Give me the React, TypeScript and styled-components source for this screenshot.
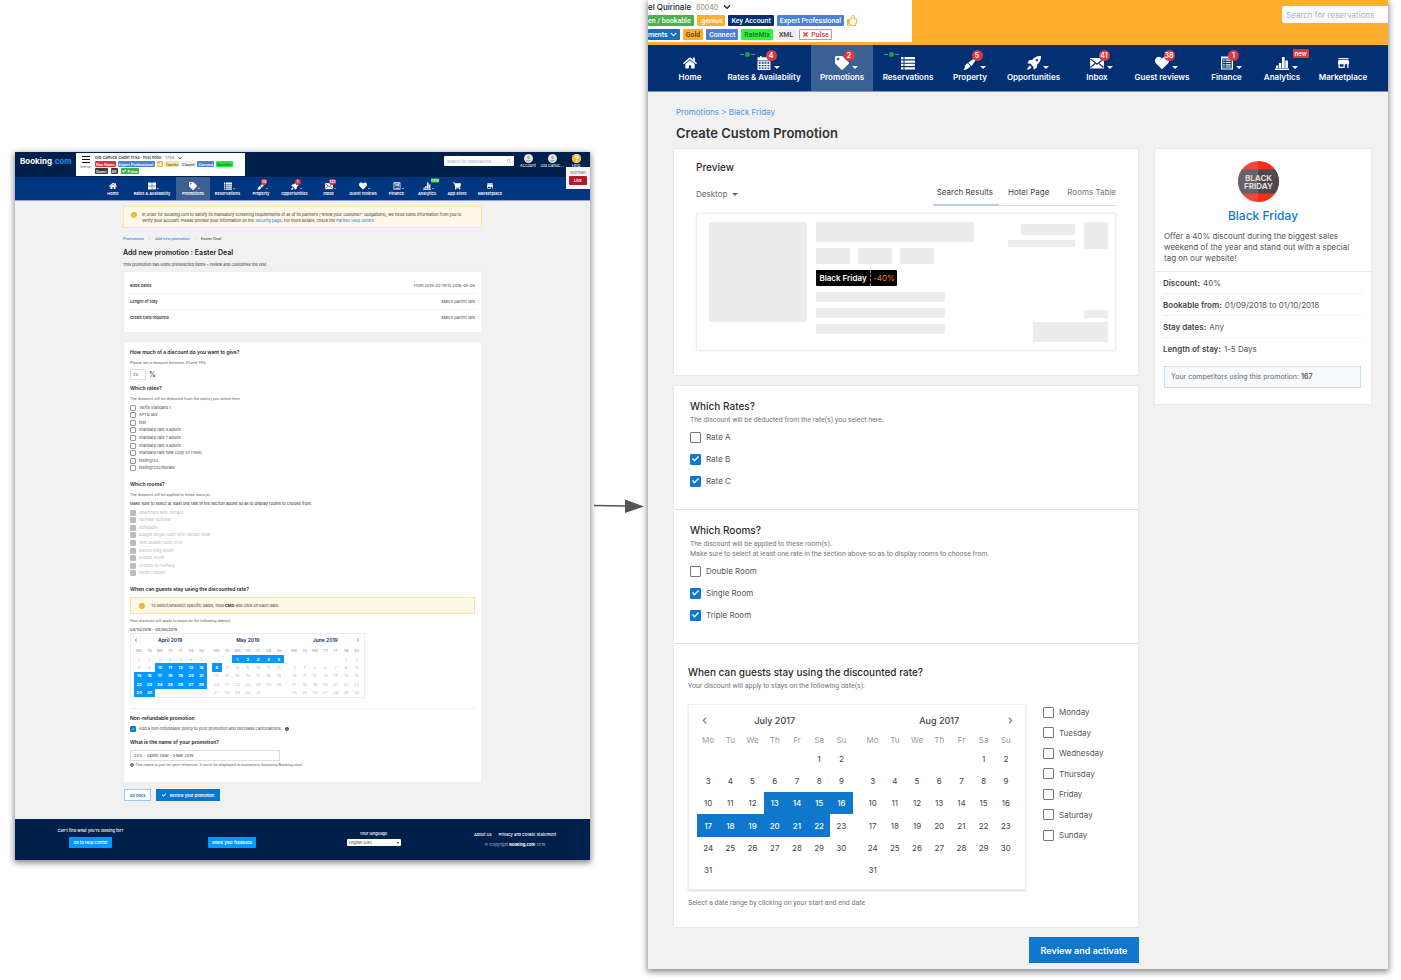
import React from "react";
import styled, { createGlobalStyle, css } from "styled-components";
import {
  FaHome, FaTag, FaHeart, FaShoppingCart, FaThumbsUp, FaRegThumbsUp, FaChevronDown,
  FaChevronLeft, FaChevronRight, FaTimes, FaSearch, FaUserCircle, FaQuestionCircle,
  FaInfoCircle, FaExclamationCircle, FaCheck, FaThLarge,
} from "react-icons/fa";
import { MdStore } from "react-icons/md";

const GlobalStyle = createGlobalStyle`
  *, *::before, *::after { box-sizing: border-box; }
  body { margin: 0; background: #fff; font-family: Inter, "Liberation Sans", sans-serif; color: #333; }
  h1, h2, h3, p, ul, dl, dd { margin: 0; padding: 0; }
  button, input, select { font-family: inherit; margin: 0; }
  a { text-decoration: none; color: inherit; }
  svg { display: block; }
`;

const compact = css`
  font-family: Roboto, "Liberation Sans", sans-serif;
`;

/* ---------- stage ---------- */
const Stage = styled.main`
  display: grid;
  grid-template-columns: 575fr 58fr 740fr;
  align-items: start;
  padding: 0 13px 11px 15px;
`;
const Screen = styled.section<{ $top?: number }>`
  margin-top: ${(p) => p.$top ?? 0}px;
  background: #f1f1f1;
  min-width: 0;
  box-shadow: 0 2px 6px 1px rgba(0, 0, 0, 0.45);
`;
const ArrowCell = styled.div`
  padding: 496px 3px 0 4px;
`;

/* ---------- shared parts ---------- */
const Check = styled.input<{ $size: number }>`
  appearance: none;
  flex: none;
  display: grid;
  place-content: center;
  width: ${(p) => p.$size}px;
  height: ${(p) => p.$size}px;
  border: 1px solid ${(p) => (p.$size < 8 ? "#999" : "#777")};
  border-radius: 1px;
  background: #fff;
  &::before {
    content: "";
    width: ${(p) => p.$size - 3}px;
    height: ${(p) => p.$size - 3}px;
    background: #fff;
    clip-path: polygon(6% 50%, 18% 38%, 38% 58%, 82% 14%, 94% 26%, 38% 84%);
    opacity: 0;
  }
  &:checked { background: #0f78cc; border-color: #0f78cc; }
  &:checked::before { opacity: 1; }
  &:disabled { background: #bdbdbd; border-color: #bdbdbd; }
`;
const NavBar = styled.nav<{ $small?: boolean }>`
  display: grid;
  background: ${(p) => (p.$small ? "#003580" : "#023072")};
  ${(p) =>
    p.$small
      ? css`
          grid-template-columns: 83fr 30fr 48fr 34fr 35fr 32fr 35fr 33fr 36fr 31fr 30fr 30fr 36fr 82fr;
          height: 24px;
          border-bottom: 1px solid #8ea6cc;
        `
      : css`
          grid-template-columns: 15fr 54fr 94fr 62fr 70fr 54fr 73fr 54fr 76fr 53fr 58fr 64fr 13fr;
          height: 47px;
          border-bottom: 1px solid #7f95b8;
        `}
`;
const NavItem = styled.a<{ $active?: boolean; $small?: boolean }>`
  position: relative;
  display: flex;
  flex-direction: column;
  align-items: center;
  color: #fff;
  white-space: nowrap;
  background: ${(p) => (p.$active ? "#3c6094" : "transparent")};
  min-width: 0;
  font-weight: 600;
  ${(p) =>
    p.$small
      ? css`
          padding-top: 5px;
          font-size: 4px;
          line-height: 6px;
        `
      : css`
          padding-top: 9px;
          font-size: 8px;
          line-height: 12px;
        `}
`;
const NavIcon = styled.span<{ $small?: boolean }>`
  position: relative;
  display: flex;
  align-items: center;
  justify-content: center;
  width: ${(p) => (p.$small ? 8 : 15)}px;
  height: ${(p) => (p.$small ? 8 : 17)}px;
  margin-bottom: ${(p) => (p.$small ? 1 : 0)}px;
  font-size: ${(p) => (p.$small ? 8 : 14)}px;
`;
const Caret = styled.span<{ $small?: boolean }>`
  position: absolute;
  left: 100%;
  bottom: ${(p) => (p.$small ? 1 : 2)}px;
  margin-left: ${(p) => (p.$small ? 1 : 2)}px;
  border: solid transparent;
  border-width: ${(p) => (p.$small ? "1px 1px 0" : "3px 3px 0")};
  border-top-color: #fff;
`;
const Badge = styled.span<{ $small?: boolean; $tone?: "new" | "green" }>`
  position: absolute;
  left: ${(p) => (p.$small ? 4 : 9)}px;
  top: ${(p) => (p.$small ? -3 : -4)}px;
  min-width: ${(p) => (p.$small ? 6 : 11)}px;
  padding: 0 1px;
  text-align: center;
  font-size: ${(p) => (p.$small ? 4 : 7)}px;
  line-height: ${(p) => (p.$small ? 6 : 11)}px;
  border-radius: 6px;
  background: #d93a41;
  color: #fff;
  ${(p) =>
    p.$tone === "new" &&
    css`
      left: 18px;
      top: -5px;
      padding: 0 2px;
      font-size: 6px;
      line-height: 9px;
      border-radius: 1px;
    `}
  ${(p) =>
    p.$tone === "green" &&
    css`
      left: 8px;
      top: -4px;
      border-radius: 1px;
      background: #0a9a2c;
      line-height: 5px;
      padding: 0;
    `}
`;
const Beacon = styled.span`
  position: absolute;
  right: 17px;
  top: -2px;
  display: grid;
  place-content: center;
  width: 15px;
  height: 5px;
  background: linear-gradient(90deg, #5f87a8 0 4px, transparent 4px 11px, #5f87a8 11px) center / 100% 1px no-repeat;
  &::before {
    content: "";
    width: 5px;
    height: 5px;
    border-radius: 50%;
    background: #1fa034;
  }
`;

const Glyph = ({ children }: { children: React.ReactNode }) => (
  <svg width="1em" height="1em" viewBox="0 0 14 14" fill="currentColor">{children}</svg>
);
const BarsIcon = () => (
  <Glyph><path d="M0 12.500h14V14H0zM1 9.500h2.200V12H1zM3.900 7h2.400v5H3.900zM7 1h2.600v11H7zM10.300 4.500h2.600V12h-2.600z" /></Glyph>
);
const MailIcon = () => (
  <Glyph>
    <path d="M0 2h14v10.500H0z" />
    <path d="M0.500 3l6.500 5.200L13.500 3M0.500 11.500l4.500-4M13.500 11.500l-4.500-4" fill="none" stroke="#023072" strokeWidth="1.100" />
  </Glyph>
);
const ListIcon = () => (
  <Glyph><path d="M0 1h2.500v2.300H0zM3.500 1H14v2.300H3.500zM0 4.400h2.500v2.300H0zM3.500 4.400H14v2.300H3.500zM0 7.800h2.500v2.300H0zM3.500 7.800H14v2.300H3.500zM0 11.200h2.500v2.300H0zM3.500 11.200H14v2.300H3.500z" /></Glyph>
);
const CalendarIcon = () => (
  <Glyph>
    <path d="M3 0h1.600v1.300h4.800V0H11v1.300h2.500V4.500h-13V1.300H3z" />
    <path fillRule="evenodd" d="M.5 5.300h13V14H.5zM1.800 6.300v1.500h1.800V6.300zM4.700 6.300v1.500h1.900V6.300zM7.600 6.300v1.500h1.800V6.300zM10.500 6.300v1.500h1.800V6.300zM1.800 8.900v1.400h1.800V8.900zM4.700 8.900v1.400h1.900V8.900zM7.600 8.900v1.400h1.800V8.900zM10.500 8.900v1.400h1.800V8.900zM1.800 11.400v1.400h1.800v-1.400zM4.700 11.400v1.400h1.900v-1.400zM7.600 11.400v1.400h1.800v-1.400zM10.500 11.400v1.400h1.800v-1.400z" />
  </Glyph>
);
const BrushIcon = () => (
  <Glyph>
    <path d="M12.300.4c.8-.4 1.700.5 1.300 1.300L8.600 9 5.200 5.800z" transform="translate(0 1)" />
    <path d="M4.700 7.300l2.700 2.600c-1.200 2.400-3.900 3.900-7.200 4 1.300-.8 1.500-2 1.700-3.200.3-1.700 1.300-2.900 2.800-3.400z" />
  </Glyph>
);
const RocketIcon = () => (
  <Glyph>
    <path fillRule="evenodd" d="M14 0c.1 3.700-1.100 6.400-3.700 8.600l-.6 3.200-2.900 1.900-.6-3.100-2.800-2.800L.3 7.200l1.900-2.900 3.200-.6C7.600 1.100 10.300-.1 14 0zM9.900 2.900a1.200 1.200 0 100 2.400 1.200 1.200 0 000-2.400z" />
    <path d="M2.800 9.400l1.800 1.800C3.500 12.600 2 13.700.2 13.800c.1-1.800 1.200-3.300 2.600-4.400z" />
  </Glyph>
);
const LedgerIcon = () => (
  <Glyph><path fillRule="evenodd" d="M1 .5h12v13H1zM2.300 2.500v10h9.400v-10zM3.200 3.600h1.500v1.200H3.200zM5.600 3.600h5.200v1.200H5.600zM3.200 5.900h1.500v1.200H3.200zM5.600 5.900h5.200v1.200H5.600zM3.200 8.200h1.500v1.200H3.200zM5.600 8.200h5.200v1.200H5.600zM3.200 10.400h1.500v1.200H3.200zM5.600 10.400h5.200v1.200H5.600z" /></Glyph>
);

type Item = { label: string; icon: React.ReactNode; badge?: string; tone?: "new" | "green"; caret?: boolean; active?: boolean; beacon?: boolean };

function Nav({ items, small }: { items: Item[]; small?: boolean }) {
  return (
    <NavBar $small={small}>
      <span />
      {items.map((it) => (
        <NavItem key={it.label} href="#" $small={small} $active={it.active}>
          <NavIcon $small={small}>
            {it.icon}
            {it.beacon && <Beacon />}
            {it.badge && <Badge $small={small} $tone={it.tone}>{it.badge}</Badge>}
            {it.caret && <Caret $small={small} />}
          </NavIcon>
          {it.label}
        </NavItem>
      ))}
    </NavBar>
  );
}

const smallNav: Item[] = [
  { label: "Home", icon: <FaHome /> },
  { label: "Rates & Availability", icon: <FaThLarge />, caret: true },
  { label: "Promotions", icon: <FaTag />, caret: true, active: true },
  { label: "Reservations", icon: <ListIcon />, caret: true },
  { label: "Property", icon: <BrushIcon />, badge: "13", caret: true },
  { label: "Opportunities", icon: <RocketIcon />, badge: "1", caret: true },
  { label: "Inbox", icon: <MailIcon />, badge: "121", caret: true },
  { label: "Guest reviews", icon: <FaHeart />, caret: true },
  { label: "Finance", icon: <LedgerIcon />, caret: true },
  { label: "Analytics", icon: <BarsIcon />, badge: "new", tone: "green", caret: true },
  { label: "App Store", icon: <FaShoppingCart /> },
  { label: "Marketplace", icon: <MdStore /> },
];
const largeNav: Item[] = [
  { label: "Home", icon: <FaHome /> },
  { label: "Rates & Availability", icon: <CalendarIcon />, badge: "4", caret: true, beacon: true },
  { label: "Promotions", icon: <FaTag />, badge: "2", caret: true, active: true },
  { label: "Reservations", icon: <ListIcon />, beacon: true },
  { label: "Property", icon: <BrushIcon />, badge: "5", caret: true },
  { label: "Opportunities", icon: <RocketIcon />, caret: true },
  { label: "Inbox", icon: <MailIcon />, badge: "41", caret: true },
  { label: "Guest reviews", icon: <FaHeart />, badge: "38", caret: true },
  { label: "Finance", icon: <LedgerIcon />, badge: "1", caret: true },
  { label: "Analytics", icon: <BarsIcon />, badge: "new", tone: "new", caret: true },
  { label: "Marketplace", icon: <MdStore size={16} /> },
];

const Tag = styled.span<{ $bg: string; $fg?: string; $line?: string; $small?: boolean; $cut?: boolean }>`
  ${compact}
  display: inline-flex;
  align-items: center;
  gap: 2px;
  white-space: nowrap;
  background: ${(p) => p.$bg};
  color: ${(p) => p.$fg ?? "#fff"};
  font-weight: 500;
  border-radius: 1px;
  ${(p) => p.$line && `box-shadow: inset 0 0 0 1px ${p.$line};`}
  ${(p) =>
    p.$small
      ? css`
          height: 6px;
          padding: 0 1px;
          font-size: 4px;
        `
      : css`
          height: 11px;
          padding: 0 3px 0 ${p.$cut ? 0 : 3}px;
          font-size: 7px;
        `}
`;
const TagRow = styled.div<{ $gap: number }>`
  display: flex;
  align-items: center;
  gap: ${(p) => p.$gap}px;
`;

/* ---------- existing page (left) ---------- */
const OldTop = styled.header`
  position: relative;
  display: flex;
  align-items: flex-start;
  height: 25px;
  padding: 1px 8px 0 5px;
  background: #00204b;
`;
const Brand = styled.a`
  width: 56px;
  padding-top: 2px;
  font-size: 8px;
  line-height: 12px;
  font-weight: 700;
  color: #fff;
  span { color: #1492e6; }
`;
const OldHotel = styled.div`
  display: flex;
  gap: 4px;
  width: 169px;
  height: 23px;
  padding: 2px 4px;
  background: #fff;
`;
const Burger = styled.button`
  display: flex;
  flex-direction: column;
  align-items: center;
  gap: 2px;
  width: 11px;
  padding: 1px 0 0;
  border: 0;
  background: none;
  font-size: 3px;
  line-height: 4px;
  color: #555;
  i { width: 8px; height: 1px; background: #111; }
`;
const OldHotelInfo = styled.div`
  display: flex;
  flex-direction: column;
  gap: 1px;
  font-size: 4px;
  line-height: 5px;
  font-weight: 500;
  color: #222;
`;
const OldName = styled.div`
  display: flex;
  align-items: center;
  gap: 4px;
  white-space: nowrap;
  small { font-size: 4px; color: #888; }
`;
const OldSearch = styled.label`
  display: flex;
  align-items: center;
  justify-content: space-between;
  width: 70px;
  height: 10px;
  margin: 3px 2px 0 auto;
  padding: 0 3px;
  background: #fff;
  border-radius: 1px;
  color: #9db0c9;
  font-size: 4px;
  input { width: 56px; padding: 0; border: 0; font-size: 4px; outline: 0; }
  input::placeholder { color: #8fa6c6; opacity: 1; }
`;
const OldUser = styled.a<{ $gold?: boolean }>`
  display: flex;
  flex-direction: column;
  align-items: center;
  width: 24px;
  padding-top: 1px;
  font-size: 4px;
  line-height: 6px;
  color: #fff;
  white-space: nowrap;
  svg {
    width: 9px;
    height: 9px;
    border-radius: 50%;
    background: ${(p) => (p.$gold ? "#fff" : "#b4b4b4")};
    color: ${(p) => (p.$gold ? "#feb61c" : "#e8e8e8")};
  }
  &:last-of-type { margin-right: -6px; }
`;
const LiveBox = styled.div`
  position: absolute;
  z-index: 1;
  right: 0;
  top: 15px;
  width: 24px;
  height: 22px;
  padding: 2px 3px;
  background: #f4f4f8;
  text-align: center;
  font-size: 4px;
  line-height: 7px;
  color: #666;
  button {
    display: block;
    width: 100%;
    height: 9px;
    padding: 0;
    border: 0;
    border-radius: 1px;
    background: #b01c2c;
    color: #fff;
    font-size: 4px;
    font-weight: 600;
  }
`;
const OldBody = styled.div`
  padding: 5px 108px 18px;
`;
const Notice = styled.div<{ $inner?: boolean }>`
  display: flex;
  align-items: ${(p) => (p.$inner ? "center" : "flex-start")};
  gap: ${(p) => (p.$inner ? 6 : 5)}px;
  height: ${(p) => (p.$inner ? 17 : 22)}px;
  margin-top: ${(p) => (p.$inner ? 5 : 0)}px;
  padding: ${(p) => (p.$inner ? "0 8px" : "5px 7px")};
  border: 1px solid #fbe3a8;
  background: #fef8e7;
  font-size: 4px;
  line-height: 6px;
  color: #333;
  white-space: nowrap;
  svg { flex: none; width: 6px; height: 6px; color: #eda818; }
  a { color: #0b71c4; }
`;
const OldCrumbs = styled.nav`
  ${compact}
  display: flex;
  gap: 5px;
  margin-top: 8px;
  font-size: 4px;
  line-height: 6px;
  color: #444;
  a { color: #1779cf; }
`;
const OldTitle = styled.h1`
  margin-top: 6px;
  font-size: 7px;
  line-height: 10px;
  font-weight: 600;
  color: #222;
`;
const OldIntro = styled.p`
  margin-top: 4px;
  font-size: 4px;
  line-height: 6px;
  white-space: nowrap;
`;
const OldCard = styled.section<{ $form?: boolean }>`
  margin-top: ${(p) => (p.$form ? 8 : 3)}px;
  padding: ${(p) => (p.$form ? "7px 6px 14px" : "5px 6px 7px")};
  background: #fff;
  border: 1px solid #eee;
`;
const Facts = styled.dl`
  div {
    display: flex;
    justify-content: space-between;
    align-items: center;
    height: 16px;
    font-size: 4px;
  }
  div + div { border-top: 1px solid #f2f2f2; }
  dt { font-weight: 600; }
  dd { color: #444; }
`;
const OldHeading = styled.h2<{ $gap?: number }>`
  margin-top: ${(p) => p.$gap ?? 0}px;
  font-size: 5px;
  line-height: 6px;
  font-weight: 600;
  color: #222;
  white-space: nowrap;
`;
const OldNote = styled.p<{ $gap?: number; $dark?: boolean }>`
  ${(p) => !p.$dark && compact}
  margin-top: ${(p) => p.$gap ?? 5}px;
  display: flex;
  align-items: center;
  gap: 1px;
  font-size: 4px;
  line-height: 6px;
  color: ${(p) => (p.$dark ? "#222" : "#666")};
  white-space: nowrap;
`;
const OldPercent = styled.label`
  display: flex;
  align-items: center;
  gap: 3px;
  margin-top: 3px;
  font-size: 7px;
  line-height: 11px;
  input {
    width: 16px;
    height: 11px;
    padding: 0 2px;
    border: 1px solid #ddd;
    font-size: 4px;
    color: #444;
  }
`;
const OldList = styled.ul`
  display: grid;
  grid-auto-rows: 1fr;
  height: 68px;
  margin-top: 2px;
  list-style: none;
`;
const OldOption = styled.label<{ $off?: boolean }>`
  display: flex;
  align-items: center;
  gap: 3px;
  height: 100%;
  font-size: 4px;
  line-height: 6px;
  font-weight: 400;
  color: ${(p) => (p.$off ? "#b5b5b5" : "#444")};
  white-space: nowrap;
`;
const OldCalendar = styled.div`
  display: grid;
  grid-template-columns: repeat(3, 1fr);
  gap: 5px;
  width: 68%;
  height: 65px;
  padding: 0 2px 0 3px;
  border: 1px solid #eee;
`;
const OldMonthHead = styled.div`
  display: grid;
  grid-template-columns: 6px 1fr 6px;
  align-items: center;
  height: 11px;
  text-align: center;
  font-size: 5px;
  font-weight: 600;
  color: #0a2c6e;
  button { padding: 0; border: 0; background: none; color: #888; font-size: 4px; }
`;
const OldGrid = styled.table`
  width: 100%;
  height: 52px;
  border-collapse: collapse;
  table-layout: fixed;
  text-align: center;
  font-size: 4px;
  line-height: 5px;
  th { padding: 0; font-weight: 400; color: #999; height: 10px; }
`;
const OldDay = styled.td<{ $on: boolean }>`
  padding: 0;
  background: ${(p) => (p.$on ? "#0896ff" : "transparent")};
  color: ${(p) => (p.$on ? "#fff" : "#b8b8b8")};
  font-weight: ${(p) => (p.$on ? 700 : 400)};
`;
const OldRule = styled.hr`
  margin: 10px 0 6px;
  border: 0;
  border-top: 1px solid #eee;
`;
const OldField = styled.input`
  display: block;
  width: 150px;
  height: 11px;
  margin-top: 5px;
  padding: 0 3px;
  border: 1px solid #ddd;
  font-size: 4px;
  color: #444;
`;
const OldActions = styled.div`
  display: flex;
  gap: 5px;
  padding: 6px 1px 0;
`;
const OldButton = styled.button<{ $primary?: boolean }>`
  display: flex;
  align-items: center;
  justify-content: center;
  gap: 4px;
  width: ${(p) => (p.$primary ? 64 : 27)}px;
  height: 12px;
  padding: 0;
  border: 1px solid ${(p) => (p.$primary ? "#0b77cc" : "#9cc8ec")};
  background: ${(p) => (p.$primary ? "#0b77cc" : "#fff")};
  color: ${(p) => (p.$primary ? "#fff" : "#0b77cc")};
  font-size: 4px;
  font-weight: 600;
  white-space: nowrap;
`;
const OldFooter = styled.footer`
  display: grid;
  grid-template-columns: 151fr 132fr 151fr 132fr 9fr;
  height: 41px;
  padding-top: 9px;
  background: #00204b;
  color: #fff;
  font-size: 4px;
  line-height: 6px;
  font-weight: 500;
  white-space: nowrap;
`;
const FootCell = styled.div<{ $gap: number; $top?: number }>`
  display: flex;
  flex-direction: column;
  align-items: center;
  gap: ${(p) => p.$gap}px;
  padding-top: ${(p) => p.$top ?? 0}px;
  small { font-size: 4px; color: #8f9db5; }
  small b { color: #fff; }
`;
const Language = styled.span`
  display: flex;
  align-items: center;
  width: 54px;
  height: 7px;
  padding-right: 2px;
  border-radius: 1px;
  background: #fff;
  select {
    flex: 1;
    appearance: none;
    padding: 0 2px;
    border: 0;
    background: none;
    font-size: 4px;
    line-height: 6px;
    color: #333;
  }
  &::after {
    content: "";
    border: 1px solid transparent;
    border-top: 2px solid #222;
    border-bottom: 0;
  }
`;
const FootLinks = styled.div`
  display: flex;
  gap: 7px;
`;
const FootButton = styled.button`
  height: 11px;
  padding: 0 4px;
  border: 0;
  border-radius: 1px;
  background: #0896ff;
  color: #fff;
  font-size: 4px;
  font-weight: 600;
`;

const dayNames = ["Mo", "Tu", "We", "Th", "Fr", "Sa", "Su"];
function weeks(offset: number, count: number): (number | null)[][] {
  const cells: (number | null)[] = Array(offset).fill(null);
  for (let d = 1; d <= count; d++) cells.push(d);
  while (cells.length % 7) cells.push(null);
  return Array.from({ length: cells.length / 7 }, (_, i) => cells.slice(i * 7, i * 7 + 7));
}

const oldMonths = [
  { name: "April 2019", offset: 0, count: 30, from: 10, to: 30 },
  { name: "May 2019", offset: 2, count: 31, from: 1, to: 6 },
  { name: "June 2019", offset: 5, count: 30, from: 99, to: 0 },
];
const oldRates = ["Tarifa Standard 1", "APTB dev", "test", "Standard rate 6 adults", "Standard rate 7 adults", "Standard rate 6 adults", "Standard rate new copy v2 FINAL", "testing123", "testing123childrate"];
const oldRooms = ["Apartment with Terrace", "Sprinkle Sprinkle", "sdflkjsdfs", "budget single room With Garden view", "Test double room 1234", "Deluxe King Room", "Double Room", "Ground-to-Yurface", "Perfect Room"];

function ExistingPage() {
  return (
    <Screen $top={152}>
      <OldTop>
        <Brand href="#">Booking<span>.com</span></Brand>
        <OldHotel>
          <Burger><i /><i /><i />Internal</Burger>
          <OldHotelInfo>
            <OldName>Old Canuck Cabin 1234- Test hotel <small>1783</small> <FaChevronDown /></OldName>
            <TagRow $gap={2}>
              <Tag $small $bg="#e0313c">Non Rates</Tag>
              <Tag $small $bg="#4a80d8">Expert Professional</Tag>
              <Tag $small $bg="#feb130"><FaThumbsUp /></Tag>
              <Tag $small $bg="#fde3a2" $fg="#665">Tourist</Tag>
              <Tag $small $bg="#f4f4f4" $fg="#555">Closed</Tag>
              <Tag $small $bg="#4a80d8">Connect</Tag>
              <Tag $small $bg="#18f02c" $fg="#275">RateMix</Tag>
            </TagRow>
            <TagRow $gap={3}>
              <Tag $small $bg="#3a3a3a">Quest</Tag>
              <Tag $small $bg="#3a3a3a">XX</Tag>
              <Tag $small $bg="#3fae4c"><FaCheck />Pulse</Tag>
            </TagRow>
          </OldHotelInfo>
        </OldHotel>
        <OldSearch><input type="search" aria-label="Search for reservations" placeholder="Search for reservations" /><FaSearch /></OldSearch>
        <OldUser href="#"><FaUserCircle />Account</OldUser>
        <OldUser href="#"><FaUserCircle />Old Canuc...</OldUser>
        <OldUser href="#" $gold><FaQuestionCircle />Help</OldUser>
        <LiveBox>Norman<button>Live</button></LiveBox>
      </OldTop>
      <Nav items={smallNav} small />
      <OldBody>
        <Notice>
          <FaExclamationCircle />
          <p>
            In order for Booking.com to satisfy its mandatory screening requirements of all of its partners ("know your customer" obligations), we need some information from you to<br />
            verify your account. Please provide your information on the <a href="#">Security page</a>. For more details, check the <a href="#">Partner Help Centre</a>
          </p>
        </Notice>
        <OldCrumbs><a href="#">Promotions</a><span>›</span><a href="#">Add new promotion</a><span>›</span><span>Easter Deal</span></OldCrumbs>
        <OldTitle>Add new promotion : Easter Deal</OldTitle>
        <OldIntro>This promotion has some preselected items – review and customise the rest</OldIntro>
        <OldCard>
          <Facts>
            <div><dt>Book dates</dt><dd>From 2019-02-19 to 2019-05-06</dd></div>
            <div><dt>Length of stay</dt><dd>Match parent rate</dd></div>
            <div><dt>Credit card required</dt><dd>Match parent rate</dd></div>
          </Facts>
        </OldCard>
        <OldCard $form>
          <OldHeading>How much of a discount do you want to give?</OldHeading>
          <OldNote>Please set a discount between 20 and 99%</OldNote>
          <OldPercent><input aria-label="Discount" defaultValue="25" />%</OldPercent>
          <OldHeading $gap={5}>Which rates?</OldHeading>
          <OldNote>The discount will be deducted from the rate(s) you select here.</OldNote>
          <OldList>
            {oldRates.map((r, i) => <li key={i}><OldOption><Check type="checkbox" $size={6} />{r}</OldOption></li>)}
          </OldList>
          <OldHeading $gap={9}>Which rooms?</OldHeading>
          <OldNote>The discount will be applied to these room(s).</OldNote>
          <OldNote $gap={3} $dark>Make sure to select at least one rate in the section above so as to display rooms to choose from.</OldNote>
          <OldList>
            {oldRooms.map((r) => <li key={r}><OldOption $off><Check type="checkbox" disabled $size={6} />{r}</OldOption></li>)}
          </OldList>
          <OldHeading $gap={9}>When can guests stay using the discounted rate?</OldHeading>
          <Notice $inner><FaInfoCircle /><p>To select/unselect specific dates, hold <b>CMD</b> and click on each date.</p></Notice>
          <OldNote $gap={4}>Your discount will apply to stays on the following date(s):</OldNote>
          <OldNote $gap={3} $dark>04/10/2019 - 05/06/2019</OldNote>
          <OldCalendar>
            {oldMonths.map((m, mi) => (
              <div key={m.name}>
                <OldMonthHead>
                  {mi === 0 ? <button aria-label="Previous"><FaChevronLeft /></button> : <span />}
                  {m.name}
                  {mi === 2 ? <button aria-label="Next"><FaChevronRight /></button> : <span />}
                </OldMonthHead>
                <OldGrid>
                  <thead><tr>{dayNames.map((d) => <th key={d}>{d}</th>)}</tr></thead>
                  <tbody>
                    {weeks(m.offset, m.count).map((w, i) => (
                      <tr key={i}>{w.map((d, j) => <OldDay key={j} $on={!!d && d >= m.from && d <= m.to}>{d}</OldDay>)}</tr>
                    ))}
                  </tbody>
                </OldGrid>
              </div>
            ))}
          </OldCalendar>
          <OldRule />
          <OldHeading>Non-refundable promotion</OldHeading>
          <OldHeading as="div" $gap={5}>
            <OldOption><Check type="checkbox" defaultChecked $size={6} />Add a non-refundable policy to your promotion and decrease cancellations. <FaInfoCircle /></OldOption>
          </OldHeading>
          <OldHeading $gap={7}>What is the name of your promotion?</OldHeading>
          <OldField aria-label="Promotion name" defaultValue="25% - Easter Deal - 5 Mar 2019" />
          <OldNote $gap={1}><FaInfoCircle />This name is just for your reference. It won't be displayed to customers browsing Booking.com.</OldNote>
        </OldCard>
        <OldActions>
          <OldButton>Go back</OldButton>
          <OldButton $primary><FaCheck />Review your promotion</OldButton>
        </OldActions>
      </OldBody>
      <OldFooter>
        <FootCell $gap={3}>Can't find what you're looking for?<FootButton>Go to Help Center</FootButton></FootCell>
        <FootCell $gap={0} $top={9}><FootButton>Share your feedback</FootButton></FootCell>
        <FootCell $gap={2} $top={3}>
          <label htmlFor="lang">Your language</label>
          <Language><select id="lang"><option>English (UK)</option></select></Language>
        </FootCell>
        <FootCell $gap={4} $top={4}>
          <FootLinks><a href="#">About Us</a><a href="#">Privacy and Cookie Statement</a></FootLinks>
          <small>© Copyright <b>Booking.com</b> 2019</small>
        </FootCell>
      </OldFooter>
    </Screen>
  );
}

/* ---------- redesigned page (right) ---------- */
const Top = styled.header`
  display: flex;
  justify-content: space-between;
  align-items: flex-start;
  height: 45px;
  background: #feae2d;
`;
const Hotel = styled.div`
  display: flex;
  flex-direction: column;
  gap: 3px;
  width: 264px;
  height: 42px;
  padding-top: 2px;
  background: #fff;
`;
const HotelName = styled.div`
  display: flex;
  align-items: center;
  gap: 5px;
  height: 10px;
  font-size: 8px;
  font-weight: 500;
  color: #222;
  small { font-size: 7px; color: #888; font-weight: 400; }
`;
const Search = styled.input`
  width: 106px;
  height: 17px;
  margin-top: 6px;
  padding: 0 4px;
  border: 0;
  border-radius: 2px 0 0 2px;
  background: #fff;
  font-size: 8px;
  &::placeholder { color: #9fb0c8; opacity: 1; }
`;
const Body = styled.div`
  padding: 14px 16px 6px 25px;
`;
const Crumbs = styled.nav`
  padding-left: 3px;
  font-size: 8px;
  line-height: 12px;
  color: #4d90e2;
`;
const Title = styled.h1`
  margin: 7px 0;
  padding-left: 3px;
  font-size: 13px;
  line-height: 16px;
  font-weight: 600;
  color: #333;
`;
const Columns = styled.div`
  display: grid;
  grid-template-columns: 466fr 218fr;
  gap: 15px;
  align-items: start;
`;
const Stack = styled.div`
  display: flex;
  flex-direction: column;
  gap: 9px;
  min-width: 0;
`;
const Card = styled.section`
  background: #fff;
  border: 1px solid #e9e9e9;
`;
const PreviewCard = styled(Card)`
  padding: 11px 22px 24px;
`;
const Heading = styled.h2`
  font-size: 10px;
  line-height: 14px;
  font-weight: 500;
  color: #2b2b2b;
`;
const PreviewBar = styled.div`
  display: flex;
  justify-content: space-between;
  align-items: center;
  height: 24px;
  margin: 8px 0 7px;
`;
const Device = styled.label`
  display: flex;
  align-items: center;
  gap: 4px;
  &::after {
    content: "";
    border: 3px solid transparent;
    border-top-color: #666;
    border-bottom: 0;
  }
  select {
    appearance: none;
    padding: 0;
    border: 0;
    background: none;
    font-size: 8px;
    color: #666;
  }
`;
const Tabs = styled.div`
  display: flex;
  align-self: stretch;
  border-bottom: 1px solid #e0e0e0;
`;
const Tab = styled.button<{ $on?: boolean; $last?: boolean; $dim?: boolean }>`
  padding: 0 ${(p) => (p.$last ? 0 : p.$on ? 6 : 9)}px 2px ${(p) => (p.$on ? 4 : 9)}px;
  margin-bottom: -1px;
  border: 0;
  border-bottom: 2px solid ${(p) => (p.$on ? "#bccbe8" : "transparent")};
  background: none;
  font-size: 8px;
  color: ${(p) => (p.$dim ? "#777" : "#444")};
`;
const Mock = styled.div`
  display: flex;
  justify-content: space-between;
  height: 138px;
  padding: 8px 7px 0 12px;
  border: 1px solid #eee;
  box-shadow: 0 0 2px rgba(0, 0, 0, 0.08);
`;
const MockMain = styled.div`
  display: flex;
  gap: 9px;
`;
const MockCol = styled.div<{ $gap: number; $end?: boolean }>`
  display: flex;
  flex-direction: column;
  align-items: ${(p) => (p.$end ? "flex-end" : "flex-start")};
  gap: ${(p) => p.$gap}px;
`;
const MockRow = styled.div<{ $gap: number }>`
  display: flex;
  align-items: center;
  gap: ${(p) => p.$gap}px;
`;
const Bone = styled.span<{ $w: number; $h: number }>`
  display: block;
  width: ${(p) => p.$w}px;
  height: ${(p) => p.$h}px;
  background: #ececec;
`;
const Spacer = styled.span`
  height: 53px;
`;
const DealTag = styled.div`
  display: flex;
  align-items: center;
  height: 16px;
  border-radius: 1px;
  background: #000;
  color: #fff;
  font-size: 8px;
  line-height: 16px;
  b { width: 54px; text-align: center; font-weight: 600; }
  span { width: 27px; text-align: center; color: #ff8418; border-left: 1px dashed #888; }
`;
const FormPart = styled.div<{ $last?: boolean }>`
  padding: ${(p) => (p.$last ? "21px 15px 19px 14px" : "13px 16px 16px")};
  & + & { border-top: 1px solid #e2e2e2; }
`;
const Hint = styled.p`
  ${compact}
  margin-top: 2px;
  font-size: 7px;
  line-height: 10px;
  color: #777;
`;
const Options = styled.div<{ $gap: number }>`
  display: flex;
  flex-direction: column;
  gap: ${(p) => p.$gap}px;
`;
const RateOptions = styled(Options)`
  padding: 6px 0;
`;
const Option = styled.label`
  display: flex;
  align-items: center;
  gap: 5px;
  font-size: 8px;
  line-height: 12px;
  color: #555;
`;
const Schedule = styled.div`
  display: flex;
  gap: 17px;
  margin: 13px 0 8px;
`;
const Calendar = styled.div`
  display: grid;
  grid-template-columns: 1fr 1fr;
  gap: 9px;
  flex: 0 1 338px;
  height: 186px;
  padding: 5px 8px 0;
  border: 1px solid #eee;
  box-shadow: 0 1px 2px rgba(0, 0, 0, 0.16);
`;
const MonthHead = styled.div`
  display: grid;
  grid-template-columns: 14px 1fr 14px;
  align-items: center;
  height: 21px;
  text-align: center;
  font-size: 9px;
  font-weight: 500;
  color: #444;
  button { display: grid; place-content: center; padding: 0; border: 0; background: none; color: #777; font-size: 7px; }
`;
const Grid = styled.table`
  width: 100%;
  height: 150px;
  border-collapse: collapse;
  table-layout: fixed;
  text-align: center;
  font-size: 8px;
  th { padding: 0; height: 17px; font-weight: 400; color: #999; }
`;
const Day = styled.td<{ $on: boolean }>`
  padding: 0;
  background: ${(p) => (p.$on ? "#0f78cc" : "transparent")};
  color: ${(p) => (p.$on ? "#fff" : "#444")};
  font-weight: ${(p) => (p.$on ? 500 : 400)};
`;
const WeekdayOptions = styled(Options)`
  padding-top: 2px;
  justify-content: space-between;
  height: 137px;
`;
const Submit = styled.button`
  align-self: flex-end;
  width: 110px;
  height: 26px;
  padding: 0;
  border: 0;
  background: #0f78cc;
  color: #fff;
  font-size: 9px;
  font-weight: 600;
`;
const Aside = styled(Card)`
  padding-bottom: 16px;
  font-size: 8px;
`;
const Promo = styled.div`
  display: flex;
  flex-direction: column;
  align-items: center;
  padding: 12px 9px 7px;
  border-bottom: 1px solid #eaeaea;
  svg { margin-right: 9px; }
  h2 { margin: 5px 0 6px; font-size: 12px; line-height: 18px; font-weight: 500; color: #0f78cc; }
  p { align-self: stretch; line-height: 11px; color: #555; }
`;
const Details = styled.dl`
  padding: 0 9px 0 8px;
  div { display: flex; align-items: center; gap: 3px; height: 22px; color: #555; }
  div:first-child { height: 21px; }
  div + div { border-top: 1px solid #f0f0f0; }
  dt { font-weight: 600; color: #444; }
`;
const Competitors = styled.p`
  margin: 7px 10px 0 9px;
  padding: 0 6px;
  border: 1px solid #cbddf3;
  background: #f8fafe;
  font-size: 7px;
  line-height: 20px;
  color: #666;
`;

const newMonths = [
  { name: "July 2017", from: 13, to: 22 },
  { name: "Aug 2017", from: 99, to: 0 },
];

function Emblem() {
  return (
    <svg width="41" height="41" viewBox="0 0 41 41" role="img" aria-label="Black Friday">
      <defs><clipPath id="disc"><circle cx="20.500" cy="20.500" r="20.500" /></clipPath></defs>
      <g clipPath="url(#disc)">
        <path fill="#f2483b" d="M0 0h20v41H0z" />
        <path fill="#fb2d12" d="M20 0h21v41H20z" />
        <path fill="#64626c" d="M0 8.500h20v24H0z" />
        <path fill="#4a4852" d="M20 8.500h21v24H20z" />
      </g>
      <g fill="#e9dcd3" fontFamily="Inter, sans-serif" fontWeight="700" fontSize="8" textAnchor="middle">
        <text x="20.500" y="19.500">BLACK</text>
        <text x="20.500" y="28">FRIDAY</text>
      </g>
    </svg>
  );
}

function RedesignedPage() {
  return (
    <Screen>
      <Top>
        <Hotel>
          <HotelName>el Quirinale <small>80040</small> <FaChevronDown /></HotelName>
          <TagRow $gap={3}>
            <Tag $bg="#4caf50" $cut>en / bookable</Tag>
            <Tag $bg="#feae2d">.genius</Tag>
            <Tag $bg="#023072">Key Account</Tag>
            <Tag $bg="#4a80d8">Expert Professional</Tag>
            <FaRegThumbsUp color="#feae2d" size={11} />
          </TagRow>
          <TagRow $gap={3}>
            <Tag $bg="#1a6fb8" $cut>ments <FaChevronDown /></Tag>
            <Tag $bg="#feae2d" $fg="#4a3a10">Gold</Tag>
            <Tag $bg="#4a80d8">Connect</Tag>
            <Tag $bg="#2cf53a" $fg="#1c6a25">RateMix</Tag>
            <Tag $bg="#eee" $fg="#444">XML</Tag>
            <Tag $bg="#fff" $fg="#d8383f" $line="#e58a8e"><FaTimes />Pulse</Tag>
          </TagRow>
        </Hotel>
        <Search type="search" aria-label="Search for reservations" placeholder="Search for reservations" />
      </Top>
      <Nav items={largeNav} />
      <Body>
        <Crumbs><a href="#">Promotions</a> &gt; <a href="#">Black Friday</a></Crumbs>
        <Title>Create Custom Promotion</Title>
        <Columns>
          <Stack>
            <PreviewCard>
              <Heading>Preview</Heading>
              <PreviewBar>
                <Device><select aria-label="Device"><option>Desktop</option></select></Device>
                <Tabs role="tablist">
                  <Tab role="tab" $on>Search Results</Tab>
                  <Tab role="tab">Hotel Page</Tab>
                  <Tab role="tab" $last $dim>Rooms Table</Tab>
                </Tabs>
              </PreviewBar>
              <Mock>
                <MockMain>
                  <Bone $w={98} $h={100} />
                  <MockCol $gap={6}>
                    <Bone $w={158} $h={20} />
                    <MockRow $gap={8}><Bone $w={34} $h={16} /><Bone $w={34} $h={16} /><Bone $w={34} $h={16} /></MockRow>
                    <DealTag><b>Black Friday</b><span>-40%</span></DealTag>
                    <Bone $w={129} $h={10} />
                    <Bone $w={129} $h={10} />
                    <Bone $w={129} $h={10} />
                  </MockCol>
                </MockMain>
                <MockCol $gap={4} $end>
                  <MockRow $gap={9}>
                    <MockCol $gap={5} $end><Bone $w={54} $h={11} /><Bone $w={67} $h={7} /></MockCol>
                    <Bone $w={24} $h={27} />
                  </MockRow>
                  <Spacer />
                  <Bone $w={24} $h={8} />
                  <Bone $w={75} $h={20} />
                </MockCol>
              </Mock>
            </PreviewCard>
            <Card>
              <FormPart>
                <Heading>Which Rates?</Heading>
                <Hint>The discount will be deducted from the rate(s) you select here.</Hint>
                <RateOptions $gap={10}>
                  <Option><Check type="checkbox" $size={11} />Rate A</Option>
                  <Option><Check type="checkbox" $size={11} defaultChecked />Rate B</Option>
                  <Option><Check type="checkbox" $size={11} defaultChecked />Rate C</Option>
                </RateOptions>
              </FormPart>
              <FormPart>
                <Heading>Which Rooms?</Heading>
                <Hint>The discount will be applied to these room(s).<br />Make sure to select at least one rate in the section above so as to display rooms to choose from.</Hint>
                <RateOptions $gap={10}>
                  <Option><Check type="checkbox" $size={11} />Double Room</Option>
                  <Option><Check type="checkbox" $size={11} defaultChecked />Single Room</Option>
                  <Option><Check type="checkbox" $size={11} defaultChecked />Triple Room</Option>
                </RateOptions>
              </FormPart>
              <FormPart $last>
                <Heading>When can guests stay using the discounted rate?</Heading>
                <Hint>Your discount will apply to stays on the following date(s):</Hint>
                <Schedule>
                  <Calendar>
                    {newMonths.map((m, mi) => (
                      <div key={m.name}>
                        <MonthHead>
                          {mi === 0 ? <button aria-label="Previous month"><FaChevronLeft /></button> : <span />}
                          {m.name}
                          {mi === 1 ? <button aria-label="Next month"><FaChevronRight /></button> : <span />}
                        </MonthHead>
                        <Grid>
                          <thead><tr>{dayNames.map((d) => <th key={d}>{d}</th>)}</tr></thead>
                          <tbody>
                            {weeks(5, 31).map((w, i) => (
                              <tr key={i}>{w.map((d, j) => <Day key={j} $on={!!d && d >= m.from && d <= m.to}>{d}</Day>)}</tr>
                            ))}
                          </tbody>
                        </Grid>
                      </div>
                    ))}
                  </Calendar>
                  <WeekdayOptions $gap={0}>
                    {["Monday", "Tuesday", "Wednesday", "Thursday", "Friday", "Saturday", "Sunday"].map((d) => (
                      <Option key={d}><Check type="checkbox" $size={11} />{d}</Option>
                    ))}
                  </WeekdayOptions>
                </Schedule>
                <Hint>Select a date range by clicking on your start and end date</Hint>
              </FormPart>
            </Card>
            <Submit>Review and activate</Submit>
          </Stack>
          <Aside as="aside">
            <Promo>
              <Emblem />
              <h2>Black Friday</h2>
              <p>Offer a 40% discount during the biggest sales weekend of the year and stand out with a special tag on our website!</p>
            </Promo>
            <Details>
              <div><dt>Discount:</dt><dd>40%</dd></div>
              <div><dt>Bookable from:</dt><dd>01/09/2018 to 01/10/2018</dd></div>
              <div><dt>Stay dates:</dt><dd>Any</dd></div>
              <div><dt>Length of stay:</dt><dd>1-5 Days</dd></div>
            </Details>
            <Competitors>Your competitors using this promotion: <b>167</b></Competitors>
          </Aside>
        </Columns>
      </Body>
    </Screen>
  );
}

export default function App() {
  return (
    <>
      <GlobalStyle />
      <Stage>
        <ExistingPage />
        <ArrowCell>
          <svg width="100%" viewBox="0 0 51 20" aria-hidden="true">
            <path d="M0 9.500L32 10" stroke="#555" strokeWidth="1.500" />
            <path d="M31 3.500L50 10.500L31 17z" fill="#555" />
          </svg>
        </ArrowCell>
        <RedesignedPage />
      </Stage>
    </>
  );
}
